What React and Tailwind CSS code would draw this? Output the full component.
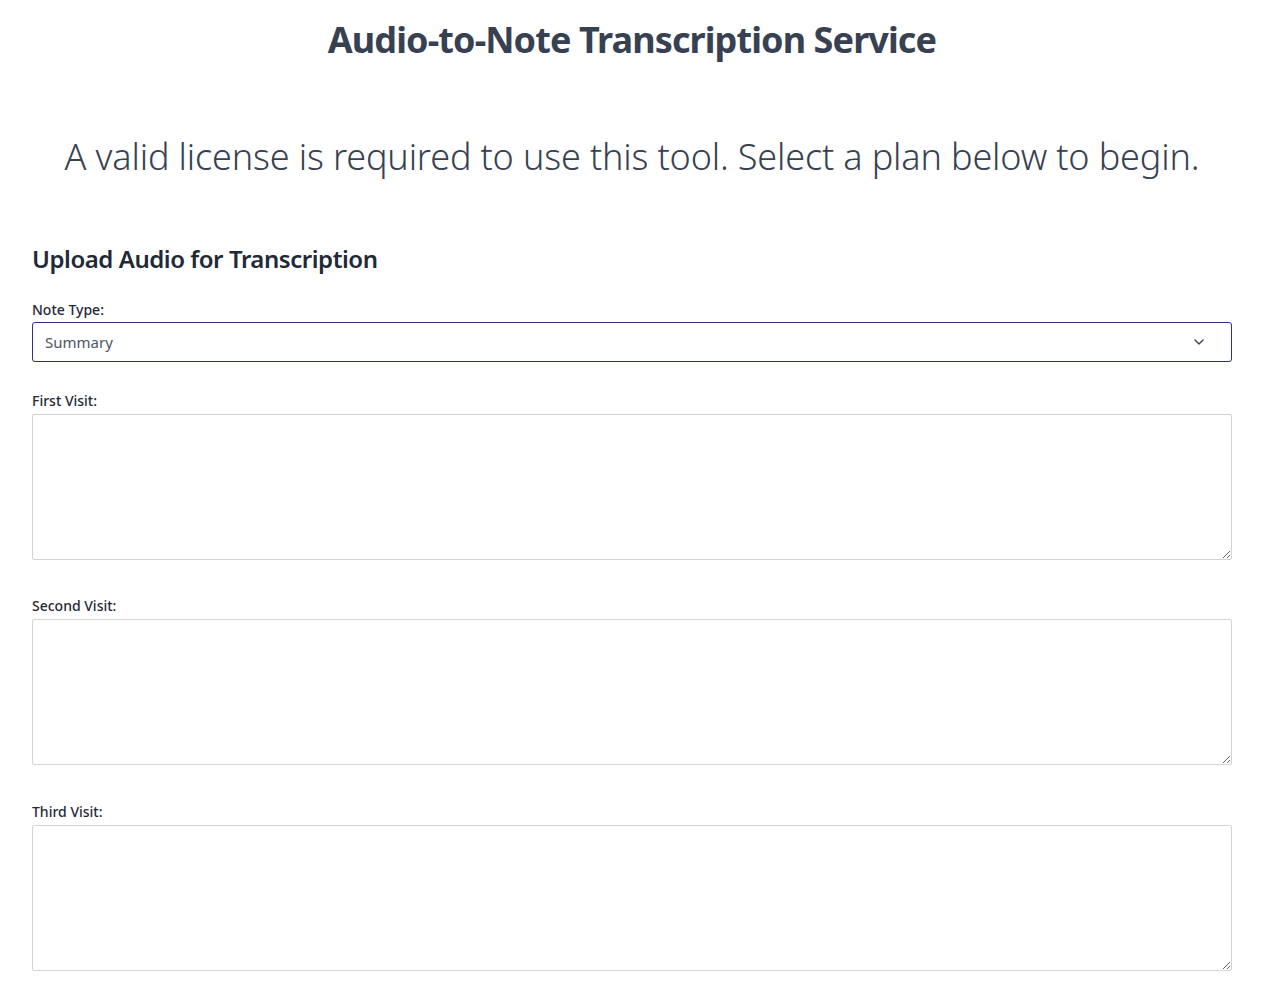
import { ChevronDown } from "lucide-react";

function Field({ label, className }) {
  return (
    <div className={className}>
      <label className="block text-sm font-medium text-[#1f2937] leading-5 mb-[3px]">
        {label}
      </label>
      <textarea className="block w-full h-[146px] border border-[#d4d4d8] bg-white rounded-[2px] outline-none" />
    </div>
  );
}

export default function App() {
  return (
    <div
      className="min-h-screen w-[1264px] bg-white text-[#2d3748] px-8"
      style={{ fontFamily: '"Noto Sans", "Open Sans", sans-serif' }}
    >
      <h1 className="pt-5 text-center text-4xl font-bold leading-10 text-[#374151] tracking-[-0.9px]">
        Audio-to-Note Transcription Service
      </h1>
      <p className="mt-[77px] text-center text-[36px] font-light leading-10 text-[#374151] tracking-[-0.15px]">
        A valid license is required to use this tool. Select a plan below to begin.
      </p>
      <h2 className="mt-[66px] text-2xl font-semibold leading-8 text-[#1f2937] tracking-[-0.45px]">
        Upload Audio for Transcription
      </h2>
      <div className="mt-[25px]">
        <label className="block text-sm font-medium text-[#1f2937] leading-5 mb-[2px]">
          Note Type:
        </label>
        <div className="relative h-10 border border-[#312e81] rounded-[3px] flex items-center px-3">
          <span className="text-[15px] text-[#4b5563]">Summary</span>
          <ChevronDown
            size={16}
            strokeWidth={2}
            className="absolute right-[24px] text-[#374151]"
          />
        </div>
      </div>
      <Field label="First Visit:" className="mt-[29px]" />
      <Field label="Second Visit:" className="mt-[36px]" />
      <Field label="Third Visit:" className="mt-[37px]" />
    </div>
  );
}
